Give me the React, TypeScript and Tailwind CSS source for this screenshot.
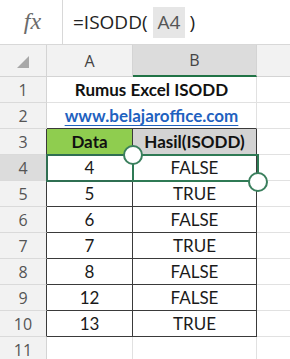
import React from "react";

const rows: { n: number; a: string; b: string }[] = [
  { n: 4, a: "4", b: "FALSE" },
  { n: 5, a: "5", b: "TRUE" },
  { n: 6, a: "6", b: "FALSE" },
  { n: 7, a: "7", b: "TRUE" },
  { n: 8, a: "8", b: "FALSE" },
  { n: 9, a: "12", b: "FALSE" },
  { n: 10, a: "13", b: "TRUE" },
];

const cellFont = { fontFamily: "Lato, 'Liberation Sans', sans-serif" };
const uiFont = { fontFamily: "'Open Sans', 'Noto Sans', sans-serif" };

function RowHead({ n, dark, selected }: { n: number; dark?: boolean; selected?: boolean }) {
  return (
    <div
      className={`h-[26px] box-border border-b border-r border-b-[#dadada] flex items-center justify-center text-[16px] text-[#555] ${
        selected ? "bg-[#dcdcdc]" : "bg-[#f2f2f2]"
      } ${dark ? "border-r-[#3a3a3a]" : "border-r-[#d4d4d4]"}`}
      style={uiFont}
    >
      {n}
    </div>
  );
}

export default function App() {
  return (
    <div className="w-[290px] h-[359px] overflow-hidden bg-white relative">
      {/* formula bar */}
      <div className="h-[45px] flex border-b border-[#d8d8d8] box-border">
        <div className="w-[63px] border-r border-[#d8d8d8] flex items-center justify-center">
          <span
            className="italic text-[24px] text-[#6b6b6b] -mt-[2px] ml-[3px]"
            style={{ fontFamily: "'Liberation Serif', 'DejaVu Serif', serif" }}
          >
            fx
          </span>
        </div>
        <div className="flex items-center pl-[10px] text-[19px] text-[#222]" style={uiFont}>
          <span>=ISODD(</span>
          <span className="ml-[5px] h-[31px] px-[5px] bg-[#e6e6e6] flex items-center text-[#555]">A4</span>
          <span className="ml-[4px]">)</span>
        </div>
      </div>

      {/* grid */}
      <div className="relative grid grid-cols-[47px_86px_124px_1fr]">
        {/* header row */}
        <div className="h-[32px] bg-[#f2f2f2] border-r border-b border-[#d4d4d4] box-border flex items-end justify-end pr-[17px] pb-[8px]">
          <svg width="12" height="12" viewBox="0 0 12 12">
            <polygon points="12,0 12,12 0,12" fill="#a8a8a8" />
          </svg>
        </div>
        <div
          className="h-[32px] bg-[#f2f2f2] border-r border-b border-[#d4d4d4] box-border flex items-center justify-center text-[16px] text-[#444]"
          style={uiFont}
        >
          A
        </div>
        <div
          className="h-[32px] bg-[#dcdcdc] border-r border-r-[#d4d4d4] border-b-2 border-b-[#217346] box-border flex items-center justify-center text-[16px] text-[#444]"
          style={uiFont}
        >
          B
        </div>
        <div className="h-[32px] bg-[#f2f2f2] border-b border-[#d4d4d4] box-border" />

        {/* row 1 */}
        <RowHead n={1} />
        <div
          className="col-span-2 h-[26px] box-border border-b border-r border-[#e1e1e1] flex items-center justify-center font-bold text-[17px] text-[#111]"
          style={cellFont}
        >
          Rumus Excel ISODD
        </div>
        <div className="h-[26px] box-border border-b border-[#e1e1e1]" />

        {/* row 2 */}
        <RowHead n={2} />
        <div
          className="col-span-2 h-[26px] box-border border-b border-b-[#3a3a3a] border-r border-r-[#e1e1e1] flex items-center justify-center font-bold text-[17px] text-[#1f62c0] underline underline-offset-[3px]"
          style={cellFont}
        >
          www.belajaroffice.com
        </div>
        <div className="h-[26px] box-border border-b border-[#e1e1e1]" />

        {/* row 3 */}
        <RowHead n={3} dark />
        <div
          className="h-[26px] box-border border-b border-r border-[#3a3a3a] bg-[#8fcd4f] flex items-center justify-center font-bold text-[17px] text-[#111]"
          style={cellFont}
        >
          Data
        </div>
        <div
          className="h-[26px] box-border border-b border-r border-[#3a3a3a] bg-[#d3d3d3] flex items-center justify-center font-bold text-[17px] text-[#111]"
          style={cellFont}
        >
          Hasil(ISODD)
        </div>
        <div className="h-[26px] box-border border-b border-[#e1e1e1]" />

        {rows.map((r) => (
          <React.Fragment key={r.n}>
            <RowHead n={r.n} dark selected={r.n === 4} />
            <div
              className="h-[26px] box-border border-b border-r border-[#3a3a3a] flex items-center justify-center text-[17px] text-[#1a1a1a]"
              style={cellFont}
            >
              {r.a}
            </div>
            <div
              className="h-[26px] box-border border-b border-r border-[#3a3a3a] flex items-center justify-center text-[17px] text-[#1a1a1a]"
              style={cellFont}
            >
              {r.b}
            </div>
            <div className="h-[26px] box-border border-b border-[#e1e1e1]" />
          </React.Fragment>
        ))}

        {/* row 11 */}
        <RowHead n={11} />
        <div className="h-[26px] box-border border-b border-r border-[#e1e1e1]" />
        <div className="h-[26px] box-border border-b border-r border-[#e1e1e1]" />
        <div className="h-[26px] box-border border-b border-[#e1e1e1]" />

        {/* reference highlight on A4 */}
        <div className="absolute left-[46px] top-[109px] w-[88px] h-[28px] border-2 border-[#2f6f52] box-border pointer-events-none" />
        {/* selection on B4 */}
        <div className="absolute left-[132px] top-[109px] w-[127px] h-[28px] border-2 border-[#2f7a55] box-border pointer-events-none" />
        <div className="absolute left-[123px] top-[100px] w-[20px] h-[20px] rounded-full bg-white border-2 border-[#3a7f5d] box-border" />
        <div className="absolute left-[248px] top-[127px] w-[20px] h-[20px] rounded-full bg-white border-2 border-[#3a7f5d] box-border" />
      </div>
    </div>
  );
}
